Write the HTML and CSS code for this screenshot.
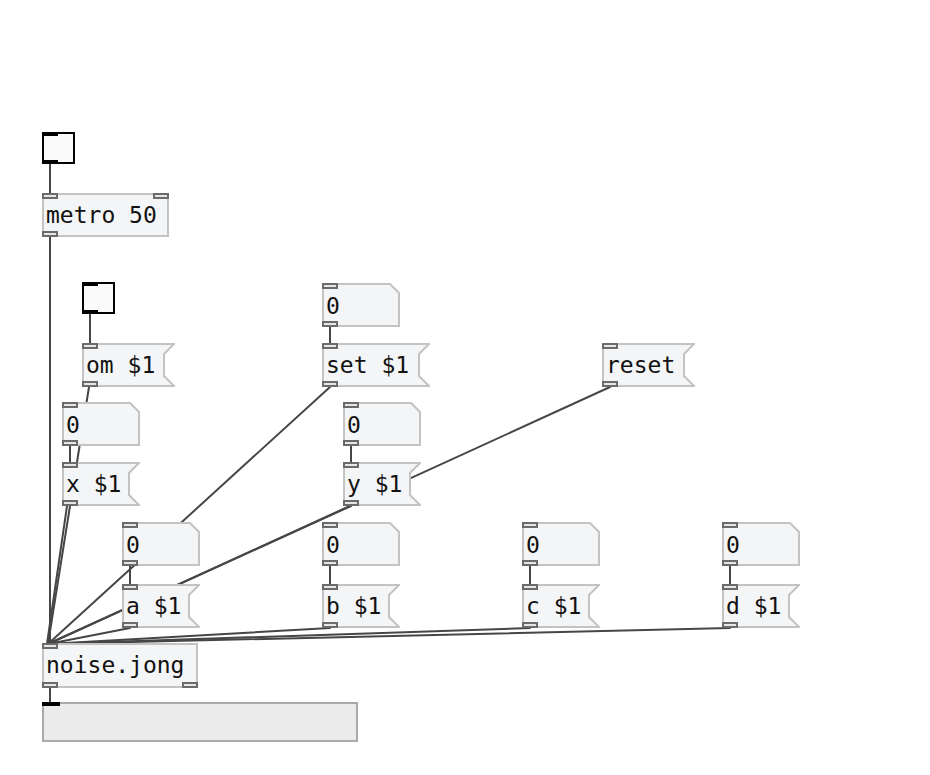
FILE: index.html
```html
<!DOCTYPE html>
<html lang="en">
<head>
    <meta charset="UTF-8">
    <meta name="viewport" content="width=device-width, initial-scale=1.0">
    <title>noise.jong patch</title>
    <link rel="stylesheet" href="styles.css">
</head>

<body>
    <div class="canvas" id="canvas">
        <svg class="wires" id="wires" width="930" height="775" xmlns="http://www.w3.org/2000/svg"></svg>
    </div>

    <script>
        // Patch boxes: type, position, size, text and iolets
        const boxes = [
            { type: 'tgl', x: 42,  y: 132, w: 33,  h: 32 },
            { type: 'obj', x: 42,  y: 193, w: 127, h: 44, text: 'metro 50', ins: ['l', 'r'], outs: ['l'] },
            { type: 'tgl', x: 82,  y: 282, w: 33,  h: 32 },
            { type: 'msg', x: 82,  y: 343, w: 93,  h: 44, text: 'om $1' },
            { type: 'num', x: 62,  y: 402, w: 78,  h: 44, text: '0' },
            { type: 'msg', x: 62,  y: 462, w: 78,  h: 44, text: 'x $1' },
            { type: 'num', x: 322, y: 283, w: 78,  h: 44, text: '0' },
            { type: 'msg', x: 322, y: 343, w: 108, h: 44, text: 'set $1' },
            { type: 'msg', x: 602, y: 343, w: 93,  h: 44, text: 'reset' },
            { type: 'num', x: 343, y: 402, w: 78,  h: 44, text: '0' },
            { type: 'msg', x: 343, y: 462, w: 78,  h: 44, text: 'y $1' },
            { type: 'num', x: 122, y: 522, w: 78,  h: 44, text: '0' },
            { type: 'num', x: 322, y: 522, w: 78,  h: 44, text: '0' },
            { type: 'num', x: 522, y: 522, w: 78,  h: 44, text: '0' },
            { type: 'num', x: 722, y: 522, w: 78,  h: 44, text: '0' },
            { type: 'msg', x: 122, y: 584, w: 78,  h: 44, text: 'a $1' },
            { type: 'msg', x: 322, y: 584, w: 78,  h: 44, text: 'b $1' },
            { type: 'msg', x: 522, y: 584, w: 78,  h: 44, text: 'c $1' },
            { type: 'msg', x: 722, y: 584, w: 78,  h: 44, text: 'd $1' },
            { type: 'obj', x: 42,  y: 643, w: 156, h: 45, text: 'noise.jong', ins: ['l'], outs: ['l', 'r'] },
            { type: 'hsl', x: 42,  y: 702, w: 316, h: 40 }
        ];

        // Connections as [x1, y1, x2, y2, width]
        const wires = [
            [50, 164, 50, 193],
            [50, 237, 50, 644],
            [90, 314, 90, 343],
            [89, 387, 77, 462],
            [70, 446, 70, 462],
            [70, 506, 48, 644, 2],
            [67, 506, 47, 644, 2],
            [330, 327, 330, 343],
            [330, 387, 48, 644],
            [610, 387, 48, 644],
            [351, 446, 351, 462],
            [351, 506, 48, 644],
            [130, 566, 130, 584],
            [330, 566, 330, 584],
            [530, 566, 530, 584],
            [730, 566, 730, 584],
            [130, 628, 48, 644],
            [330, 628, 48, 644],
            [530, 628, 48, 644],
            [730, 628, 48, 644],
            [50, 688, 50, 702]
        ];

        const canvas = document.getElementById('canvas');
        const wireLayer = document.getElementById('wires');
        const svgNS = 'http://www.w3.org/2000/svg';

        wires.forEach(([x1, y1, x2, y2, width]) => {
            const line = document.createElementNS(svgNS, 'line');
            line.setAttribute('x1', x1);
            line.setAttribute('y1', y1);
            line.setAttribute('x2', x2);
            line.setAttribute('y2', y2);
            line.setAttribute('class', 'wire');
            if (width) line.setAttribute('stroke-width', width);
            wireLayer.appendChild(line);
        });

        // Outline of a box, drawn inside its own svg
        function outline(b) {
            const w = b.w, h = b.h;
            if (b.type === 'msg') {
                return `${1},1 ${w - 1},1 ${w - 11},11 ${w - 11},${h - 11} ${w - 1},${h - 1} 1,${h - 1}`;
            }
            if (b.type === 'num') {
                return `1,1 ${w - 10},1 ${w - 1},10 ${w - 1},${h - 1} 1,${h - 1}`;
            }
            return `1,1 ${w - 1},1 ${w - 1},${h - 1} 1,${h - 1}`;
        }

        function iolet(el, side, edge) {
            const io = document.createElement('div');
            io.className = `iolet ${edge} ${side}`;
            el.appendChild(io);
        }

        boxes.forEach(b => {
            const el = document.createElement('div');
            el.className = `box ${b.type}`;
            el.style.left = b.x + 'px';
            el.style.top = b.y + 'px';
            el.style.width = b.w + 'px';
            el.style.height = b.h + 'px';

            if (b.type === 'msg' || b.type === 'num' || b.type === 'obj') {
                const shape = document.createElementNS(svgNS, 'svg');
                shape.setAttribute('class', 'shape');
                shape.setAttribute('width', b.w);
                shape.setAttribute('height', b.h);
                const poly = document.createElementNS(svgNS, 'polygon');
                poly.setAttribute('points', outline(b));
                shape.appendChild(poly);
                el.appendChild(shape);

                const label = document.createElement('span');
                label.className = 'label';
                label.textContent = b.text;
                el.appendChild(label);
            }

            (b.ins || ['l']).forEach(side => iolet(el, side, 'in'));
            if (b.type !== 'hsl') (b.outs || ['l']).forEach(side => iolet(el, side, 'out'));

            canvas.appendChild(el);
        });
    </script>
</body>
</html>
```

FILE: styles.css
```css
body {
    margin: 0;
    padding: 0;
    background-color: #fff;
    font-family: 'DejaVu Sans Mono', 'Liberation Mono', monospace;
}

.canvas {
    position: relative;
    width: 930px;
    height: 775px;
    overflow: hidden;
    background: #fff;
}

.wires {
    position: absolute;
    left: 0;
    top: 0;
}

.wire {
    stroke: #464646;
    stroke-width: 2;
    stroke-linecap: round;
}

.box {
    position: absolute;
    box-sizing: border-box;
}

.shape {
    position: absolute;
    left: 0;
    top: 0;
}

.shape polygon {
    fill: #f4f5f7;
    stroke: #c3c3c3;
    stroke-width: 2;
}

.label {
    position: relative;
    display: block;
    padding-left: 4px;
    font-size: 23px;
    line-height: 44px;
    color: #111;
    white-space: pre;
}

.num .label {
    line-height: 46px;
}

.tgl {
    background: #fafafa;
    border: 2px solid #000;
}

.hsl {
    background: #ebebeb;
    border: 2px solid #a9a9a9;
}

.iolet {
    position: absolute;
    box-sizing: border-box;
    width: 16px;
    height: 6px;
    background: #e6e6e6;
    border: 2px solid #6b6b6b;
}

.iolet.in { top: 0; }
.iolet.out { bottom: 0; }
.iolet.l { left: 0; }
.iolet.r { right: 0; }

.tgl .iolet {
    width: 16px;
    height: 4px;
    background: #000;
    border: none;
}

.tgl .iolet.in { top: -2px; left: -2px; }
.tgl .iolet.out { bottom: -2px; left: -2px; }

.hsl .iolet {
    width: 18px;
    height: 4px;
    background: #000;
    border: none;
    top: -2px;
    left: -2px;
}
```
